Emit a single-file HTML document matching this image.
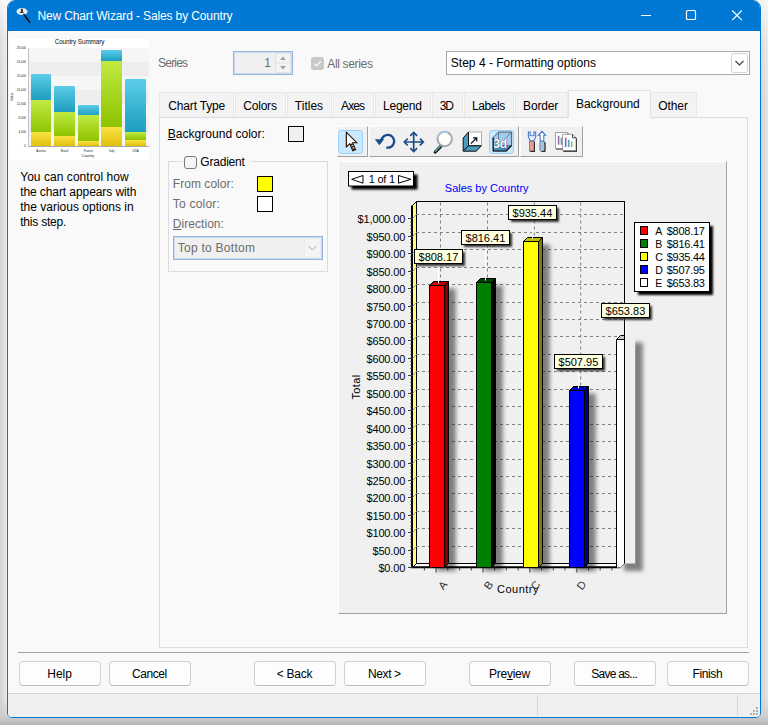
<!DOCTYPE html>
<html lang="en"><head><meta charset="utf-8"><title>New Chart Wizard - Sales by Country</title>
<style>
*{box-sizing:border-box;margin:0;padding:0}
html,body{width:768px;height:725px;overflow:hidden;background:#fff}
body{font-family:"Liberation Sans","DejaVu Sans",sans-serif;font-size:12px;color:#000;position:relative;background:#e6e6e6}
.sh{position:absolute}
.abs{position:absolute}
#win{position:absolute;left:7px;top:0;width:754px;height:718px;border:1px solid #0078d4;border-radius:8px 8px 5px 5px;background:#f9f9f9;overflow:hidden}
#title{position:absolute;left:-1px;top:-1px;width:754px;height:31px;background:#0078d4;color:#fff}
#title .cap{position:absolute;left:30.4px;top:7.5px;font-size:12px;line-height:16px;white-space:nowrap}
.t{position:absolute;white-space:nowrap;line-height:15px;font-size:12px}
.g{color:#6d6d6d}
.tt{z-index:3}
.btn{position:absolute;height:25px;width:82px;top:661px;background:#fdfdfd;border:1px solid #d0d0d0;border-bottom-color:#bcbcbc;border-radius:4px;text-align:center;line-height:23px;font-size:12px}
.tab{position:absolute;top:92px;height:25px;background:#f3f3f3;border:1px solid #e8e8e8;border-bottom:none;text-align:center;line-height:25px;font-size:12px;white-space:nowrap}
.tab.sel{top:90px;height:28px;background:#f9f9f9;line-height:26px;border-color:#e2e2e2;z-index:2}
.cbox{position:absolute;width:16px;height:16px;border:1px solid #000}
u{text-decoration:underline;text-underline-offset:1px}
</style></head>
<body>
<div class="sh" style="left:0;top:0;width:8px;height:725px;background:linear-gradient(to right,#d2d2d2,#ececec)"></div>
<div class="sh" style="left:760px;top:0;width:8px;height:725px;background:linear-gradient(to right,#d0d0d0,#e4e4e4)"></div>
<div class="sh" style="left:0;top:700px;width:8px;height:18px;background:linear-gradient(to bottom,rgba(204,204,204,0),#cccccc)"></div>
<div class="sh" style="left:760px;top:700px;width:8px;height:18px;background:linear-gradient(to bottom,rgba(204,204,204,0),#cccccc)"></div>
<div class="sh" style="left:0;top:717px;width:768px;height:8px;background:linear-gradient(to bottom,#cccccc,#b6b6b6)"></div>
<div class="sh" style="left:0;top:0;width:768px;height:110px;background:linear-gradient(to bottom,rgba(255,255,255,.75),rgba(255,255,255,.25) 40px,rgba(255,255,255,0))"></div>
<div class="sh" style="left:8px;top:712px;width:5px;height:5px;background:#f6f6f6"></div>
<div class="sh" style="left:755px;top:712px;width:5px;height:5px;background:#f6f6f6"></div>
<div id="win">
<div id="title"><svg class="abs" style="left:9px;top:6.5px" width="18" height="18" viewBox="0 0 18 18"><ellipse cx="6" cy="4.5" rx="5.5" ry="3.6" fill="#e4eef8"/><path d="M6 1.5c-1 0-1.3 1-1 2 .2.8-.3 1.500-1.600 2.400l5 .2c-1-.6-1.700-1.400-1.500-2.400.3-1.200 0-2.200-.9-2.200z" fill="#4a3020"/><path d="M8 7.500L13.600 15.300" stroke="#111" stroke-width="1.600" stroke-linecap="round"/></svg><span class="cap" style="letter-spacing:-0.126px">New Chart Wizard - Sales by Country</span><svg class="abs" style="left:500px;top:0" width="254" height="32" viewBox="0 0 254 32" fill="none" stroke="#fff" stroke-width="1.200"><path d="M134 15.500h10"/><rect x="179.500" y="10.500" width="9" height="9" rx="1"/><path d="M225.200 10.500l9.600 9.600M234.800 10.500l-9.600 9.600"/></svg></div>
<div class="abs" id="thumb" style="left:2px;top:38px;width:139px;height:121px;background:#fff">
<div class="abs" style="left:17.5px;top:8.600000000000001px;width:121.5px;height:99.0px;background:repeating-linear-gradient(to bottom,#f6f6f6 0,#f6f6f6 14.1px,#eeeeee 14.1px,#eeeeee 28.2px);border-left:1px solid #c4c4c4;border-bottom:1px solid #a8a8a8"></div>
<div class="abs" style="left:0;top:0;width:139px;text-align:center;font-size:6.4px;line-height:8px;top:-1.2px;color:#111;letter-spacing:-0.12px">Country Summary</div>
<div class="abs" style="left:20.5px;top:35.0px;width:20.9px;height:26.3px;background:linear-gradient(#5ccde8,#1d9dbf);border-radius:1px 1px 0 0"></div>
<div class="abs" style="left:20.5px;top:60.8px;width:20.9px;height:32.9px;background:linear-gradient(#c0ea42,#8ec300)"></div>
<div class="abs" style="left:20.5px;top:93.2px;width:20.9px;height:14.2px;background:linear-gradient(#f9e244,#dfc00c)"></div>
<div class="abs" style="left:44.1px;top:47.1px;width:20.9px;height:26.1px;background:linear-gradient(#5ccde8,#1d9dbf);border-radius:1px 1px 0 0"></div>
<div class="abs" style="left:44.1px;top:72.7px;width:20.9px;height:24.3px;background:linear-gradient(#c0ea42,#8ec300)"></div>
<div class="abs" style="left:44.1px;top:96.5px;width:20.9px;height:10.9px;background:linear-gradient(#f9e244,#dfc00c)"></div>
<div class="abs" style="left:67.9px;top:65.5px;width:20.9px;height:11.4px;background:linear-gradient(#5ccde8,#1d9dbf);border-radius:1px 1px 0 0"></div>
<div class="abs" style="left:67.9px;top:76.4px;width:20.9px;height:26.1px;background:linear-gradient(#c0ea42,#8ec300)"></div>
<div class="abs" style="left:67.9px;top:102.0px;width:20.9px;height:5.4px;background:linear-gradient(#f9e244,#dfc00c)"></div>
<div class="abs" style="left:91.4px;top:11.2px;width:20.9px;height:11.0px;background:linear-gradient(#5ccde8,#1d9dbf);border-radius:1px 1px 0 0"></div>
<div class="abs" style="left:91.4px;top:21.7px;width:20.9px;height:66.7px;background:linear-gradient(#c0ea42,#8ec300)"></div>
<div class="abs" style="left:91.4px;top:87.9px;width:20.9px;height:19.5px;background:linear-gradient(#f9e244,#dfc00c)"></div>
<div class="abs" style="left:115.2px;top:40.1px;width:20.9px;height:53.2px;background:linear-gradient(#5ccde8,#1d9dbf);border-radius:1px 1px 0 0"></div>
<div class="abs" style="left:115.2px;top:92.8px;width:20.9px;height:8.3px;background:linear-gradient(#c0ea42,#8ec300)"></div>
<div class="abs" style="left:115.2px;top:100.6px;width:20.9px;height:6.8px;background:linear-gradient(#f9e244,#dfc00c)"></div>
<div class="abs" style="left:0;width:16px;top:6.6px;text-align:right;font-size:3px;line-height:4px;color:#222">28,000</div>
<div class="abs" style="left:0;width:16px;top:20.7px;text-align:right;font-size:3px;line-height:4px;color:#222">24,000</div>
<div class="abs" style="left:0;width:16px;top:34.8px;text-align:right;font-size:3px;line-height:4px;color:#222">20,000</div>
<div class="abs" style="left:0;width:16px;top:48.9px;text-align:right;font-size:3px;line-height:4px;color:#222">16,000</div>
<div class="abs" style="left:0;width:16px;top:63.0px;text-align:right;font-size:3px;line-height:4px;color:#222">12,000</div>
<div class="abs" style="left:0;width:16px;top:77.1px;text-align:right;font-size:3px;line-height:4px;color:#222">8,000</div>
<div class="abs" style="left:0;width:16px;top:91.2px;text-align:right;font-size:3px;line-height:4px;color:#222">4,000</div>
<div class="abs" style="left:0;width:16px;top:105.3px;text-align:right;font-size:3px;line-height:4px;color:#222">0</div>
<div class="abs" style="left:21.0px;width:20px;top:110.0px;text-align:center;font-size:3px;line-height:4px;color:#222">Austria</div>
<div class="abs" style="left:44.5px;width:20px;top:110.0px;text-align:center;font-size:3px;line-height:4px;color:#222">Brazil</div>
<div class="abs" style="left:68.3px;width:20px;top:110.0px;text-align:center;font-size:3px;line-height:4px;color:#222">France</div>
<div class="abs" style="left:91.8px;width:20px;top:110.0px;text-align:center;font-size:3px;line-height:4px;color:#222">Italy</div>
<div class="abs" style="left:115.7px;width:20px;top:110.0px;text-align:center;font-size:3px;line-height:4px;color:#222">USA</div>
<div class="abs" style="left:68px;width:20px;top:114.5px;text-align:center;font-size:3.500px;line-height:4px;color:#222">Country</div>
<div class="abs" style="left:-8.5px;width:20px;top:56px;text-align:center;font-size:3.500px;line-height:4px;color:#222;transform:rotate(-90deg)">Value</div>
</div>
<div class="t" style="left:12.20px;top:168.80px;letter-spacing:0.048px">You can control how</div>
<div class="t" style="left:12.20px;top:183.80px;letter-spacing:-0.084px">the chart appears with</div>
<div class="t" style="left:12.20px;top:198.80px;letter-spacing:0.005px">the various options in</div>
<div class="t" style="left:12.20px;top:213.80px;letter-spacing:-0.214px">this step.</div>
<div class="t g" style="left:150.10px;top:54.90px;letter-spacing:-0.823px">Series</div>
<div class="abs" style="left:225px;top:50px;width:60px;height:24px;border:1px solid #94b2dc;background:#f0f0f0;box-shadow:inset 0 0 0 1px #cfdcf0"></div>
<div class="t g" style="left:254px;top:54.5px;width:9px;text-align:right">1</div>
<svg class="abs" style="left:267px;top:52px" width="16" height="20" viewBox="0 0 16 20"><rect x="0.5" y="0.5" width="15" height="19" fill="#f3f3f3" stroke="#e2e2e2"/><path d="M0.5 10h15" stroke="#e2e2e2"/><path d="M5 7l3-3.500 3 3.500z" fill="#a0a0a0"/><path d="M5 13l3 3.500 3-3.500z" fill="#a0a0a0"/></svg>
<svg class="abs" style="left:303px;top:56px" width="13" height="13" viewBox="0 0 13 13"><rect x="0" y="0" width="13" height="13" rx="2.500" fill="#c9c9c9"/><path d="M3.200 6.600l2.300 2.300 4.300-4.600" fill="none" stroke="#fff" stroke-width="1.200"/></svg>
<div class="t g" style="left:319.30px;top:55.90px;letter-spacing:-0.342px">All series</div>
<div class="abs" style="left:438px;top:50px;width:304px;height:24px;border:1px solid #a9a9a9;background:#fff"></div>
<div class="t" style="left:442.80px;top:54.90px;letter-spacing:0.014px">Step 4 - Formatting options</div>
<svg class="abs" style="left:723px;top:52px" width="18" height="20" viewBox="0 0 18 20"><rect x="0.5" y="0.5" width="16" height="19" rx="2" fill="#fdfdfd" stroke="#d4d4d4"/><path d="M4.500 8l4 4 4-4" fill="none" stroke="#404040" stroke-width="1.200"/></svg>
<div class="abs" style="left:151px;top:116px;width:589px;height:531px;border:1px solid #dcdcdc;background:#f9f9f9"></div>
<div class="tab" style="left:151px;width:75px;top:91px"></div>
<div class="tab" style="left:227px;width:51px;top:91px"></div>
<div class="tab" style="left:279px;width:45px;top:91px"></div>
<div class="tab" style="left:325px;width:41px;top:91px"></div>
<div class="tab" style="left:367px;width:56px;top:91px"></div>
<div class="tab" style="left:424px;width:31px;top:91px"></div>
<div class="tab" style="left:456px;width:50px;top:91px"></div>
<div class="tab" style="left:507px;width:53px;top:91px"></div>
<div class="tab sel" style="left:560px;width:83px;top:89px"></div>
<div class="tab" style="left:642px;width:47px;top:91px"></div>
<div class="t tt" style="left:160.30px;top:98.10px;letter-spacing:-0.164px">Chart Type</div>
<div class="t tt" style="left:235.30px;top:98.10px;letter-spacing:-0.215px">Colors</div>
<div class="t tt" style="left:286.80px;top:98.10px;letter-spacing:0.015px">Titles</div>
<div class="t tt" style="left:333.00px;top:98.10px;letter-spacing:-0.859px">Axes</div>
<div class="t tt" style="left:375.00px;top:98.10px;letter-spacing:-0.228px">Legend</div>
<div class="t tt" style="left:431.80px;top:98.10px;letter-spacing:-1.239px">3D</div>
<div class="t tt" style="left:464.00px;top:98.10px;letter-spacing:-0.412px">Labels</div>
<div class="t tt" style="left:515.10px;top:98.10px;letter-spacing:-0.184px">Border</div>
<div class="t tt" style="left:568.00px;top:96.10px;letter-spacing:-0.038px">Background</div>
<div class="t tt" style="left:650.30px;top:98.10px;letter-spacing:-0.103px">Other</div>
<div class="t" style="left:159.80px;top:125.80px;letter-spacing:0.024px"><u>B</u>ackground color:</div>
<div class="cbox" style="left:280px;top:125px;background:#f0f0f0"></div>
<div class="abs" style="left:160px;top:160px;width:160px;height:111px;border:1px solid #dcdcdc"></div>
<div class="abs" style="left:175px;top:154px;width:67.500px;height:14px;background:#f9f9f9"></div>
<div class="abs" style="left:176px;top:155px;width:13px;height:13px;border:1px solid #7a7a7a;border-radius:3px;background:#f5f5f5"></div>
<div class="t" style="left:192.30px;top:153.80px;letter-spacing:-0.204px">Gradient</div>
<div class="t g" style="left:164.80px;top:175.70px;letter-spacing:0.043px">From color:</div>
<div class="cbox" style="left:249px;top:175px;background:#ffff00"></div>
<div class="t g" style="left:164.80px;top:195.80px;letter-spacing:0.219px">To color:</div>
<div class="cbox" style="left:249px;top:195px;background:#fff"></div>
<div class="t g" style="left:164.80px;top:215.70px;letter-spacing:0.046px"><u>D</u>irection:</div>
<div class="abs" style="left:165px;top:235px;width:150px;height:24px;border:1px solid #94b2dc;background:#f0f0f0;box-shadow:inset 0 0 0 1px #cfdcf0"></div>
<div class="t g" style="left:169.80px;top:239.70px;letter-spacing:0.255px">Top to Bottom</div>
<svg class="abs" style="left:296px;top:237px" width="18" height="20" viewBox="0 0 18 20"><rect x="0.5" y="0.5" width="16" height="19" rx="2" fill="#f4f4f4" stroke="#ececec"/><path d="M4.500 8l4 4 4-4" fill="none" stroke="#a8a8a8" stroke-width="1"/></svg>
<div class="abs" style="left:329px;top:125px;width:31px;height:31px;background:#f0f0f0;border-right:1px solid #a0a0a0;border-bottom:1px solid #a0a0a0;border-top:1px solid #fcfcfc;border-left:1px solid #fcfcfc"></div>
<div class="abs" style="left:360.5px;top:125px;width:150.5px;height:31px;background:#f0f0f0;border-right:1px solid #a0a0a0;border-bottom:1px solid #a0a0a0;border-top:1px solid #fcfcfc;border-left:1px solid #fcfcfc"></div>
<div class="abs" style="left:511.5px;top:125px;width:63.5px;height:31px;background:#f0f0f0;border-right:1px solid #a0a0a0;border-bottom:1px solid #a0a0a0;border-top:1px solid #fcfcfc;border-left:1px solid #fcfcfc"></div>
<div class="abs" style="left:330px;top:129px;width:25px;height:24px;background:#cce8ff;border:1px solid #99d1ff;border-radius:3px"></div>
<div class="abs" style="left:481px;top:129px;width:25px;height:24px;background:#cce8ff;border:1px solid #99d1ff;border-radius:3px"></div>
<svg class="abs" style="left:0;top:0" width="752" height="716" viewBox="8 1 752 716"><path d="M346.400 132.300V146.800L349.800 143.600L352.500 149.800" fill="none" stroke="#2a1408" stroke-width="1"/><path d="M346.400 132.300V146.800L349.800 143.600L352.800 150.800L355.600 149.600L352.600 142.700H356.800Z" fill="#fff" stroke="#2a1408" stroke-width="1.100" stroke-linejoin="miter"/><path d="M351.300 143.800L354.200 150.300" stroke="#2a1408" stroke-width="2.300" stroke-dasharray="1.500 1"/><path d="M381.400 140.600A6.400 6.400 0 1 1 386.200 147.500" fill="none" stroke="#1b4b8c" stroke-width="2.300" stroke-linecap="butt"/><path d="M374.900 139.200H384.200L379.300 145.200Z" fill="#1b4b8c"/><path d="M413.700 133V151M404.800 142H422.800" stroke="#1b4b8c" stroke-width="1.700" fill="none"/><path d="M410.300 135.800L413.700 132.400L417.100 135.800M410.300 148.200L413.700 151.600L417.100 148.200M407.700 138.600L404.300 142L407.700 145.400M419.900 138.600L423.300 142L419.900 145.400" stroke="#1b4b8c" stroke-width="1.700" fill="none" stroke-linejoin="miter"/><path d="M440.800 146.300L435.300 152" stroke="#111" stroke-width="3.200" stroke-linecap="round"/><path d="M440.400 146.200L435.400 151.400" stroke="#4aa8a8" stroke-width="1.400" stroke-linecap="round"/><circle cx="444.700" cy="139" r="7.200" fill="#fffef8" stroke="#a4a8b4" stroke-width="2"/><path d="M438.200 137A7.200 7.200 0 0 1 448 132.600" fill="none" stroke="#a8d0f0" stroke-width="1.600"/><path d="M463.200 138L468.500 132V145.700L463.200 151Z" fill="#4a9cc0" stroke="#111" stroke-width="1"/><path d="M463.200 151.200L468.500 145.700H481.400L476.300 151.200Z" fill="#4a9cc0" stroke="#111" stroke-width="1"/><rect x="468.500" y="132" width="12.900" height="13.700" fill="#fff" stroke="#999" stroke-width="0.8"/><path d="M468.500 132V145.700H481.400" fill="none" stroke="#111" stroke-width="1"/><path d="M470.800 143.600L476.400 138.200M473 137.800H476.800V141.600" stroke="#111" fill="none" stroke-width="1.200"/><path d="M493.200 137.500L498.500 132H511.600V145.500L506.300 151H493.200Z" fill="#a4cbea" stroke="#4a5a6a" stroke-width="1"/><path d="M493.200 151L498.500 145.500H511.600L506.300 151Z" fill="#3f8fc2"/><path d="M498.500 132V145.500H511.600M498.500 145.500L493.200 151M506.300 137.500L511.600 132" fill="none" stroke="#4a6a88" stroke-width="0.8"/><path d="M493.200 137.500V151H506.300L511.600 145.500" fill="none" stroke="#111" stroke-width="1.200"/><text x="500.200" y="147.700" text-anchor="middle" font-family="&quot;Liberation Sans&quot;, sans-serif" font-weight="bold" font-size="12" fill="#fff" stroke="#1a2a3a" stroke-width="0.7" paint-order="stroke" letter-spacing="-0.3">3d</text><rect x="530.300" y="141.700" width="4.600" height="10.300" fill="#111"/><rect x="529.500" y="141" width="4.500" height="10" fill="#e6a08c" stroke="#555" stroke-width="0.6"/><path d="M528.400 132V137.200L530.300 140.800H533.700L535.700 137.200V132H534V135.800H530.200V132Z" fill="#f4f8ff" stroke="#4a78c8" stroke-width="1.100"/><rect x="540.800" y="141.700" width="4.800" height="10.300" rx="1.500" fill="#111"/><rect x="539.800" y="141" width="4.800" height="10.300" rx="1.800" fill="#a4c4e4" stroke="#555" stroke-width="0.6"/><path d="M542 131.300L538.300 135.300H540.200V141H543.800V135.300H545.600Z" fill="#fff" stroke="#4a78c8" stroke-width="1.100"/><path d="M556.200 133.200H568.500V149.600H556.200Z" fill="#111"/><path d="M555.500 132.500H567.500V148.500H555.500Z" fill="#fff" stroke="#8a8a8a" stroke-width="0.8"/><path d="M558.600 135.800V144.800" stroke="#8a62a8" stroke-width="1.500"/><path d="M561.400 137.800V144.800" stroke="#46a4d4" stroke-width="1.500"/><path d="M563.300 135.200H573.500L577 138.700V151.800H563.300Z" fill="#111"/><path d="M562.500 134.300H572.500L576 137.800V150.600H562.500Z" fill="#fff" stroke="#8a8a8a" stroke-width="0.8"/><path d="M572.500 134.300V137.800H576" fill="none" stroke="#222" stroke-width="0.8"/><path d="M565.700 137.800V147" stroke="#8a62a8" stroke-width="1.600"/><path d="M568.700 139.800V147" stroke="#46a4d4" stroke-width="1.600"/><path d="M571.700 141.200V147" stroke="#86c466" stroke-width="1.600"/></svg>
<div class="abs" style="left:330px;top:160px;width:389px;height:453px;background:#f0f0f0;border-left:1px solid #fff;border-top:1px solid #fff;border-right:1px solid #a0a0a0;border-bottom:1px solid #a0a0a0"></div>
<svg class="abs" style="left:0;top:0" width="752" height="716" viewBox="8 1 752 716" font-family="&quot;Liberation Sans&quot;, &quot;DejaVu Sans&quot;, sans-serif" font-size="11"><defs><filter id="b2" x="-30%" y="-30%" width="160%" height="160%"><feGaussianBlur stdDeviation="1.6"/></filter><filter id="b1" x="-30%" y="-30%" width="160%" height="160%"><feGaussianBlur stdDeviation="1.1"/></filter><filter id="b3" x="-50%" y="-5%" width="200%" height="110%"><feGaussianBlur stdDeviation="2"/></filter></defs><text x="444.8" y="192" fill="#0000ff">Sales by Country</text><rect x="351.5" y="174.5" width="66" height="15" fill="#000" filter="url(#b1)"/><rect x="348.5" y="171.5" width="65" height="14.5" fill="#fff" stroke="#000"/><path d="M351.700 179.300L363 175.500V183.200Z" fill="#fff" stroke="#000" stroke-width="1"/><path d="M410.800 179.300L398.500 175.500V183.200Z" fill="#fff" stroke="#000" stroke-width="1"/><text x="381.800" y="183" text-anchor="middle" fill="#000" letter-spacing="-0.25">1 of 1</text><rect x="416.5" y="201.5" width="208.0" height="362.0" fill="none" stroke="#000"/><path d="M412.5 205.5L416.5 201.5V563.5L412.5 567.5Z" fill="#ffff80" stroke="#000" stroke-width="1"/><path d="M412.0 205.5V567.5" stroke="#000" stroke-width="2"/><path d="M416 546.5H624.0" stroke="#808080" stroke-dasharray="3 3" fill="none"/><path d="M412.5 550.5L416.5 546.5" stroke="#808080" stroke-width="0.8" fill="none"/><path d="M416 528.5H624.0" stroke="#808080" stroke-dasharray="3 3" fill="none"/><path d="M412.5 532.5L416.5 528.5" stroke="#808080" stroke-width="0.8" fill="none"/><path d="M416 511.5H624.0" stroke="#808080" stroke-dasharray="3 3" fill="none"/><path d="M412.5 515.5L416.5 511.5" stroke="#808080" stroke-width="0.8" fill="none"/><path d="M416 493.5H624.0" stroke="#808080" stroke-dasharray="3 3" fill="none"/><path d="M412.5 497.5L416.5 493.5" stroke="#808080" stroke-width="0.8" fill="none"/><path d="M416 476.5H624.0" stroke="#808080" stroke-dasharray="3 3" fill="none"/><path d="M412.5 480.5L416.5 476.5" stroke="#808080" stroke-width="0.8" fill="none"/><path d="M416 459.5H624.0" stroke="#808080" stroke-dasharray="3 3" fill="none"/><path d="M412.5 463.5L416.5 459.5" stroke="#808080" stroke-width="0.8" fill="none"/><path d="M416 441.5H624.0" stroke="#808080" stroke-dasharray="3 3" fill="none"/><path d="M412.5 445.5L416.5 441.5" stroke="#808080" stroke-width="0.8" fill="none"/><path d="M416 424.5H624.0" stroke="#808080" stroke-dasharray="3 3" fill="none"/><path d="M412.5 428.5L416.5 424.5" stroke="#808080" stroke-width="0.8" fill="none"/><path d="M416 406.5H624.0" stroke="#808080" stroke-dasharray="3 3" fill="none"/><path d="M412.5 410.5L416.5 406.5" stroke="#808080" stroke-width="0.8" fill="none"/><path d="M416 389.5H624.0" stroke="#808080" stroke-dasharray="3 3" fill="none"/><path d="M412.5 393.5L416.5 389.5" stroke="#808080" stroke-width="0.8" fill="none"/><path d="M416 371.5H624.0" stroke="#808080" stroke-dasharray="3 3" fill="none"/><path d="M412.5 375.5L416.5 371.5" stroke="#808080" stroke-width="0.8" fill="none"/><path d="M416 354.5H624.0" stroke="#808080" stroke-dasharray="3 3" fill="none"/><path d="M412.5 358.5L416.5 354.5" stroke="#808080" stroke-width="0.8" fill="none"/><path d="M416 336.5H624.0" stroke="#808080" stroke-dasharray="3 3" fill="none"/><path d="M412.5 340.5L416.5 336.5" stroke="#808080" stroke-width="0.8" fill="none"/><path d="M416 319.5H624.0" stroke="#808080" stroke-dasharray="3 3" fill="none"/><path d="M412.5 323.5L416.5 319.5" stroke="#808080" stroke-width="0.8" fill="none"/><path d="M416 302.5H624.0" stroke="#808080" stroke-dasharray="3 3" fill="none"/><path d="M412.5 306.5L416.5 302.5" stroke="#808080" stroke-width="0.8" fill="none"/><path d="M416 284.5H624.0" stroke="#808080" stroke-dasharray="3 3" fill="none"/><path d="M412.5 288.5L416.5 284.5" stroke="#808080" stroke-width="0.8" fill="none"/><path d="M416 267.5H624.0" stroke="#808080" stroke-dasharray="3 3" fill="none"/><path d="M412.5 271.5L416.5 267.5" stroke="#808080" stroke-width="0.8" fill="none"/><path d="M416 249.5H624.0" stroke="#808080" stroke-dasharray="3 3" fill="none"/><path d="M412.5 253.5L416.5 249.5" stroke="#808080" stroke-width="0.8" fill="none"/><path d="M416 232.5H624.0" stroke="#808080" stroke-dasharray="3 3" fill="none"/><path d="M412.5 236.5L416.5 232.5" stroke="#808080" stroke-width="0.8" fill="none"/><path d="M416 214.5H624.0" stroke="#808080" stroke-dasharray="3 3" fill="none"/><path d="M412.5 218.5L416.5 214.5" stroke="#808080" stroke-width="0.8" fill="none"/><path d="M440.5 202.5V562.5" stroke="#808080" stroke-dasharray="3 3" fill="none"/><path d="M487.5 202.5V562.5" stroke="#808080" stroke-dasharray="3 3" fill="none"/><path d="M534.3 202.5V562.5" stroke="#808080" stroke-dasharray="3 3" fill="none"/><path d="M580.7 202.5V562.5" stroke="#808080" stroke-dasharray="3 3" fill="none"/><path d="M412.5 567.5L416.5 563.5H624.5L620.5 567.5Z" fill="#fff" stroke="#000" stroke-width="1"/><path d="M411.0 567.2H620.5" stroke="#000" stroke-width="2"/><path d="M408.0 567.5H412.5" stroke="#404040" stroke-width="1"/><text x="405.2" y="571.6" text-anchor="end" fill="#000" letter-spacing="-0.15">$0.00</text><path d="M408.0 550.5H412.5" stroke="#404040" stroke-width="1"/><text x="405.2" y="554.6" text-anchor="end" fill="#000" letter-spacing="-0.15">$50.00</text><path d="M408.0 532.5H412.5" stroke="#404040" stroke-width="1"/><text x="405.2" y="536.6" text-anchor="end" fill="#000" letter-spacing="-0.15">$100.00</text><path d="M408.0 515.5H412.5" stroke="#404040" stroke-width="1"/><text x="405.2" y="519.6" text-anchor="end" fill="#000" letter-spacing="-0.15">$150.00</text><path d="M408.0 497.5H412.5" stroke="#404040" stroke-width="1"/><text x="405.2" y="501.6" text-anchor="end" fill="#000" letter-spacing="-0.15">$200.00</text><path d="M408.0 480.5H412.5" stroke="#404040" stroke-width="1"/><text x="405.2" y="484.6" text-anchor="end" fill="#000" letter-spacing="-0.15">$250.00</text><path d="M408.0 463.5H412.5" stroke="#404040" stroke-width="1"/><text x="405.2" y="467.6" text-anchor="end" fill="#000" letter-spacing="-0.15">$300.00</text><path d="M408.0 445.5H412.5" stroke="#404040" stroke-width="1"/><text x="405.2" y="449.6" text-anchor="end" fill="#000" letter-spacing="-0.15">$350.00</text><path d="M408.0 428.5H412.5" stroke="#404040" stroke-width="1"/><text x="405.2" y="432.6" text-anchor="end" fill="#000" letter-spacing="-0.15">$400.00</text><path d="M408.0 410.5H412.5" stroke="#404040" stroke-width="1"/><text x="405.2" y="414.6" text-anchor="end" fill="#000" letter-spacing="-0.15">$450.00</text><path d="M408.0 393.5H412.5" stroke="#404040" stroke-width="1"/><text x="405.2" y="397.6" text-anchor="end" fill="#000" letter-spacing="-0.15">$500.00</text><path d="M408.0 375.5H412.5" stroke="#404040" stroke-width="1"/><text x="405.2" y="379.6" text-anchor="end" fill="#000" letter-spacing="-0.15">$550.00</text><path d="M408.0 358.5H412.5" stroke="#404040" stroke-width="1"/><text x="405.2" y="362.6" text-anchor="end" fill="#000" letter-spacing="-0.15">$600.00</text><path d="M408.0 340.5H412.5" stroke="#404040" stroke-width="1"/><text x="405.2" y="344.6" text-anchor="end" fill="#000" letter-spacing="-0.15">$650.00</text><path d="M408.0 323.5H412.5" stroke="#404040" stroke-width="1"/><text x="405.2" y="327.6" text-anchor="end" fill="#000" letter-spacing="-0.15">$700.00</text><path d="M408.0 306.5H412.5" stroke="#404040" stroke-width="1"/><text x="405.2" y="310.6" text-anchor="end" fill="#000" letter-spacing="-0.15">$750.00</text><path d="M408.0 288.5H412.5" stroke="#404040" stroke-width="1"/><text x="405.2" y="292.6" text-anchor="end" fill="#000" letter-spacing="-0.15">$800.00</text><path d="M408.0 271.5H412.5" stroke="#404040" stroke-width="1"/><text x="405.2" y="275.6" text-anchor="end" fill="#000" letter-spacing="-0.15">$850.00</text><path d="M408.0 253.5H412.5" stroke="#404040" stroke-width="1"/><text x="405.2" y="257.6" text-anchor="end" fill="#000" letter-spacing="-0.15">$900.00</text><path d="M408.0 236.5H412.5" stroke="#404040" stroke-width="1"/><text x="405.2" y="240.6" text-anchor="end" fill="#000" letter-spacing="-0.15">$950.00</text><path d="M408.0 218.5H412.5" stroke="#404040" stroke-width="1"/><text x="405.2" y="222.6" text-anchor="end" fill="#000" letter-spacing="-0.15">$1,000.00</text><path d="M410.0 567.2H412.5" stroke="#404040" stroke-width="0.7"/><path d="M410.0 563.7H412.5" stroke="#404040" stroke-width="0.7"/><path d="M410.0 560.2H412.5" stroke="#404040" stroke-width="0.7"/><path d="M410.0 556.7H412.5" stroke="#404040" stroke-width="0.7"/><path d="M410.0 553.3H412.5" stroke="#404040" stroke-width="0.7"/><path d="M410.0 549.8H412.5" stroke="#404040" stroke-width="0.7"/><path d="M410.0 546.3H412.5" stroke="#404040" stroke-width="0.7"/><path d="M410.0 542.8H412.5" stroke="#404040" stroke-width="0.7"/><path d="M410.0 539.3H412.5" stroke="#404040" stroke-width="0.7"/><path d="M410.0 535.8H412.5" stroke="#404040" stroke-width="0.7"/><path d="M410.0 532.3H412.5" stroke="#404040" stroke-width="0.7"/><path d="M410.0 528.9H412.5" stroke="#404040" stroke-width="0.7"/><path d="M410.0 525.4H412.5" stroke="#404040" stroke-width="0.7"/><path d="M410.0 521.9H412.5" stroke="#404040" stroke-width="0.7"/><path d="M410.0 518.4H412.5" stroke="#404040" stroke-width="0.7"/><path d="M410.0 514.9H412.5" stroke="#404040" stroke-width="0.7"/><path d="M410.0 511.4H412.5" stroke="#404040" stroke-width="0.7"/><path d="M410.0 507.9H412.5" stroke="#404040" stroke-width="0.7"/><path d="M410.0 504.5H412.5" stroke="#404040" stroke-width="0.7"/><path d="M410.0 501.0H412.5" stroke="#404040" stroke-width="0.7"/><path d="M410.0 497.5H412.5" stroke="#404040" stroke-width="0.7"/><path d="M410.0 494.0H412.5" stroke="#404040" stroke-width="0.7"/><path d="M410.0 490.5H412.5" stroke="#404040" stroke-width="0.7"/><path d="M410.0 487.0H412.5" stroke="#404040" stroke-width="0.7"/><path d="M410.0 483.5H412.5" stroke="#404040" stroke-width="0.7"/><path d="M410.0 480.1H412.5" stroke="#404040" stroke-width="0.7"/><path d="M410.0 476.6H412.5" stroke="#404040" stroke-width="0.7"/><path d="M410.0 473.1H412.5" stroke="#404040" stroke-width="0.7"/><path d="M410.0 469.6H412.5" stroke="#404040" stroke-width="0.7"/><path d="M410.0 466.1H412.5" stroke="#404040" stroke-width="0.7"/><path d="M410.0 462.6H412.5" stroke="#404040" stroke-width="0.7"/><path d="M410.0 459.1H412.5" stroke="#404040" stroke-width="0.7"/><path d="M410.0 455.6H412.5" stroke="#404040" stroke-width="0.7"/><path d="M410.0 452.2H412.5" stroke="#404040" stroke-width="0.7"/><path d="M410.0 448.7H412.5" stroke="#404040" stroke-width="0.7"/><path d="M410.0 445.2H412.5" stroke="#404040" stroke-width="0.7"/><path d="M410.0 441.7H412.5" stroke="#404040" stroke-width="0.7"/><path d="M410.0 438.2H412.5" stroke="#404040" stroke-width="0.7"/><path d="M410.0 434.7H412.5" stroke="#404040" stroke-width="0.7"/><path d="M410.0 431.2H412.5" stroke="#404040" stroke-width="0.7"/><path d="M410.0 427.8H412.5" stroke="#404040" stroke-width="0.7"/><path d="M410.0 424.3H412.5" stroke="#404040" stroke-width="0.7"/><path d="M410.0 420.8H412.5" stroke="#404040" stroke-width="0.7"/><path d="M410.0 417.3H412.5" stroke="#404040" stroke-width="0.7"/><path d="M410.0 413.8H412.5" stroke="#404040" stroke-width="0.7"/><path d="M410.0 410.3H412.5" stroke="#404040" stroke-width="0.7"/><path d="M410.0 406.8H412.5" stroke="#404040" stroke-width="0.7"/><path d="M410.0 403.4H412.5" stroke="#404040" stroke-width="0.7"/><path d="M410.0 399.9H412.5" stroke="#404040" stroke-width="0.7"/><path d="M410.0 396.4H412.5" stroke="#404040" stroke-width="0.7"/><path d="M410.0 392.9H412.5" stroke="#404040" stroke-width="0.7"/><path d="M410.0 389.4H412.5" stroke="#404040" stroke-width="0.7"/><path d="M410.0 385.9H412.5" stroke="#404040" stroke-width="0.7"/><path d="M410.0 382.4H412.5" stroke="#404040" stroke-width="0.7"/><path d="M410.0 379.0H412.5" stroke="#404040" stroke-width="0.7"/><path d="M410.0 375.5H412.5" stroke="#404040" stroke-width="0.7"/><path d="M410.0 372.0H412.5" stroke="#404040" stroke-width="0.7"/><path d="M410.0 368.5H412.5" stroke="#404040" stroke-width="0.7"/><path d="M410.0 365.0H412.5" stroke="#404040" stroke-width="0.7"/><path d="M410.0 361.5H412.5" stroke="#404040" stroke-width="0.7"/><path d="M410.0 358.0H412.5" stroke="#404040" stroke-width="0.7"/><path d="M410.0 354.6H412.5" stroke="#404040" stroke-width="0.7"/><path d="M410.0 351.1H412.5" stroke="#404040" stroke-width="0.7"/><path d="M410.0 347.6H412.5" stroke="#404040" stroke-width="0.7"/><path d="M410.0 344.1H412.5" stroke="#404040" stroke-width="0.7"/><path d="M410.0 340.6H412.5" stroke="#404040" stroke-width="0.7"/><path d="M410.0 337.1H412.5" stroke="#404040" stroke-width="0.7"/><path d="M410.0 333.6H412.5" stroke="#404040" stroke-width="0.7"/><path d="M410.0 330.2H412.5" stroke="#404040" stroke-width="0.7"/><path d="M410.0 326.7H412.5" stroke="#404040" stroke-width="0.7"/><path d="M410.0 323.2H412.5" stroke="#404040" stroke-width="0.7"/><path d="M410.0 319.7H412.5" stroke="#404040" stroke-width="0.7"/><path d="M410.0 316.2H412.5" stroke="#404040" stroke-width="0.7"/><path d="M410.0 312.7H412.5" stroke="#404040" stroke-width="0.7"/><path d="M410.0 309.2H412.5" stroke="#404040" stroke-width="0.7"/><path d="M410.0 305.8H412.5" stroke="#404040" stroke-width="0.7"/><path d="M410.0 302.3H412.5" stroke="#404040" stroke-width="0.7"/><path d="M410.0 298.8H412.5" stroke="#404040" stroke-width="0.7"/><path d="M410.0 295.3H412.5" stroke="#404040" stroke-width="0.7"/><path d="M410.0 291.8H412.5" stroke="#404040" stroke-width="0.7"/><path d="M410.0 288.3H412.5" stroke="#404040" stroke-width="0.7"/><path d="M410.0 284.8H412.5" stroke="#404040" stroke-width="0.7"/><path d="M410.0 281.3H412.5" stroke="#404040" stroke-width="0.7"/><path d="M410.0 277.9H412.5" stroke="#404040" stroke-width="0.7"/><path d="M410.0 274.4H412.5" stroke="#404040" stroke-width="0.7"/><path d="M410.0 270.9H412.5" stroke="#404040" stroke-width="0.7"/><path d="M410.0 267.4H412.5" stroke="#404040" stroke-width="0.7"/><path d="M410.0 263.9H412.5" stroke="#404040" stroke-width="0.7"/><path d="M410.0 260.4H412.5" stroke="#404040" stroke-width="0.7"/><path d="M410.0 256.9H412.5" stroke="#404040" stroke-width="0.7"/><path d="M410.0 253.5H412.5" stroke="#404040" stroke-width="0.7"/><path d="M410.0 250.0H412.5" stroke="#404040" stroke-width="0.7"/><path d="M410.0 246.5H412.5" stroke="#404040" stroke-width="0.7"/><path d="M410.0 243.0H412.5" stroke="#404040" stroke-width="0.7"/><path d="M410.0 239.5H412.5" stroke="#404040" stroke-width="0.7"/><path d="M410.0 236.0H412.5" stroke="#404040" stroke-width="0.7"/><path d="M410.0 232.5H412.5" stroke="#404040" stroke-width="0.7"/><path d="M410.0 229.1H412.5" stroke="#404040" stroke-width="0.7"/><path d="M410.0 225.6H412.5" stroke="#404040" stroke-width="0.7"/><path d="M410.0 222.1H412.5" stroke="#404040" stroke-width="0.7"/><path d="M424.4 567.5V570.5" stroke="#404040" stroke-width="1"/><path d="M436.1 567.5V572.5" stroke="#404040" stroke-width="1"/><path d="M447.8 567.5V570.5" stroke="#404040" stroke-width="1"/><path d="M459.6 567.5V570.5" stroke="#404040" stroke-width="1"/><path d="M471.3 567.5V570.5" stroke="#404040" stroke-width="1"/><path d="M483.0 567.5V572.5" stroke="#404040" stroke-width="1"/><path d="M494.7 567.5V570.5" stroke="#404040" stroke-width="1"/><path d="M506.4 567.5V570.5" stroke="#404040" stroke-width="1"/><path d="M518.2 567.5V570.5" stroke="#404040" stroke-width="1"/><path d="M529.9 567.5V572.5" stroke="#404040" stroke-width="1"/><path d="M541.6 567.5V570.5" stroke="#404040" stroke-width="1"/><path d="M553.3 567.5V570.5" stroke="#404040" stroke-width="1"/><path d="M565.0 567.5V570.5" stroke="#404040" stroke-width="1"/><path d="M576.8 567.5V572.5" stroke="#404040" stroke-width="1"/><path d="M588.5 567.5V570.5" stroke="#404040" stroke-width="1"/><path d="M600.2 567.5V570.5" stroke="#404040" stroke-width="1"/><path d="M611.9 567.5V570.5" stroke="#404040" stroke-width="1"/><text transform="translate(359.600 387) rotate(-90)" text-anchor="middle" fill="#000" letter-spacing="0.35">Total</text><text x="497" y="592.800" fill="#000" letter-spacing="0.5">Country</text><text transform="translate(442.7 585.300) rotate(-52)" text-anchor="middle" y="3.8" font-size="11" fill="#333">A</text><text transform="translate(488.5 585.300) rotate(-52)" text-anchor="middle" y="3.8" font-size="11" fill="#333">B</text><text transform="translate(535.5 585.300) rotate(-52)" text-anchor="middle" y="3.8" font-size="11" fill="#333">C</text><text transform="translate(581.5 585.300) rotate(-52)" text-anchor="middle" y="3.8" font-size="11" fill="#333">D</text><rect x="437" y="288.5" width="18.8" height="282.5" fill="#000" fill-opacity="0.47" filter="url(#b3)"/><rect x="484" y="285.5" width="18.8" height="285.5" fill="#000" fill-opacity="0.47" filter="url(#b3)"/><rect x="531" y="244.5" width="18.8" height="326.5" fill="#000" fill-opacity="0.47" filter="url(#b3)"/><rect x="577" y="393.5" width="18.8" height="177.5" fill="#000" fill-opacity="0.47" filter="url(#b3)"/><rect x="624" y="342.5" width="18.8" height="228.5" fill="#000" fill-opacity="0.47" filter="url(#b3)"/><rect x="625.0" y="335" width="10.2" height="228.5" fill="#f0f0f0"/><path d="M444.5 285.5L448.5 281.5V563.5L444.5 567.5Z" fill="#800000" stroke="#000" stroke-width="1"/><path d="M429.5 285.5L433.5 281.5H448.5L444.5 285.5Z" fill="#c00000" stroke="#000" stroke-width="1"/><rect x="429.5" y="285.5" width="15" height="282.0" fill="#ff0000" stroke="#000" stroke-width="1"/><path d="M491.5 282.5L495.5 278.5V563.5L491.5 567.5Z" fill="#000000" stroke="#000" stroke-width="1"/><path d="M476.5 282.5L480.5 278.5H495.5L491.5 282.5Z" fill="#004000" stroke="#000" stroke-width="1"/><rect x="476.5" y="282.5" width="15" height="285.0" fill="#008000" stroke="#000" stroke-width="1"/><path d="M538.5 241.5L542.5 237.5V563.5L538.5 567.5Z" fill="#808000" stroke="#000" stroke-width="1"/><path d="M523.5 241.5L527.5 237.5H542.5L538.5 241.5Z" fill="#c0c000" stroke="#000" stroke-width="1"/><rect x="523.5" y="241.5" width="15" height="326.0" fill="#ffff00" stroke="#000" stroke-width="1"/><path d="M584.5 390.5L588.5 386.5V563.5L584.5 567.5Z" fill="#000080" stroke="#000" stroke-width="1"/><path d="M569.5 390.5L573.5 386.5H588.5L584.5 390.5Z" fill="#0000c0" stroke="#000" stroke-width="1"/><rect x="569.5" y="390.5" width="15" height="177.0" fill="#0000ff" stroke="#000" stroke-width="1"/><path d="M616.5 339.5L620.5 335.5H624.5V339.5Z" fill="#c8c8c8" stroke="#000"/><path d="M616.5 339.5H624.5V563.5L620.5 567.5H616.5Z" fill="#ffffff"/><path d="M616.5 568.0V339.5H624.5" fill="none" stroke="#000"/><path d="M624.5 201.5V563.5" stroke="#000"/><path d="M438.5 263.5V283.5" stroke="#fff" stroke-width="1"/><rect x="417.0" y="252.0" width="48" height="14" fill="#333" filter="url(#b1)"/><rect x="414.5" y="249.5" width="48" height="14" fill="#ffffe1" stroke="#000"/><text x="438.4" y="261.1" text-anchor="middle" fill="#000">$808.17</text><path d="M485.5 244.5V280.5" stroke="#fff" stroke-width="1"/><rect x="464.0" y="233.0" width="48" height="14" fill="#333" filter="url(#b1)"/><rect x="461.5" y="230.5" width="48" height="14" fill="#ffffe1" stroke="#000"/><text x="485.4" y="242.1" text-anchor="middle" fill="#000">$816.41</text><path d="M532.5 219.5V239.5" stroke="#fff" stroke-width="1"/><rect x="511.0" y="208.0" width="48" height="14" fill="#333" filter="url(#b1)"/><rect x="508.5" y="205.5" width="48" height="14" fill="#ffffe1" stroke="#000"/><text x="532.4" y="217.1" text-anchor="middle" fill="#000">$935.44</text><path d="M578.5 368.5V388.5" stroke="#fff" stroke-width="1"/><rect x="557.0" y="357.0" width="48" height="14" fill="#333" filter="url(#b1)"/><rect x="554.5" y="354.5" width="48" height="14" fill="#ffffe1" stroke="#000"/><text x="578.4" y="366.1" text-anchor="middle" fill="#000">$507.95</text><path d="M625.5 317.5V337.5" stroke="#fff" stroke-width="1"/><rect x="604.0" y="306.0" width="48" height="14" fill="#333" filter="url(#b1)"/><rect x="601.5" y="303.5" width="48" height="14" fill="#ffffe1" stroke="#000"/><text x="625.4" y="315.1" text-anchor="middle" fill="#000">$653.83</text><rect x="638" y="226" width="75" height="69" fill="#000" filter="url(#b1)"/><rect x="634.500" y="222.500" width="75" height="69" fill="#fff" stroke="#000"/><rect x="640.500" y="226.5" width="7" height="8" fill="#ff0000" stroke="#000"/><text x="655.200" y="234.6" fill="#000" font-size="10.5">A</text><text x="704.600" y="234.6" text-anchor="end" fill="#000" letter-spacing="-0.28">$808.17</text><rect x="640.500" y="239.5" width="7" height="8" fill="#008000" stroke="#000"/><text x="655.200" y="247.6" fill="#000" font-size="10.5">B</text><text x="704.600" y="247.6" text-anchor="end" fill="#000" letter-spacing="-0.28">$816.41</text><rect x="640.500" y="252.5" width="7" height="8" fill="#ffff00" stroke="#000"/><text x="655.200" y="260.7" fill="#000" font-size="10.5">C</text><text x="704.600" y="260.7" text-anchor="end" fill="#000" letter-spacing="-0.28">$935.44</text><rect x="640.500" y="265.5" width="7" height="8" fill="#0000ff" stroke="#000"/><text x="655.200" y="273.7" fill="#000" font-size="10.5">D</text><text x="704.600" y="273.7" text-anchor="end" fill="#000" letter-spacing="-0.28">$507.95</text><rect x="640.500" y="278.5" width="7" height="8" fill="#ffffff" stroke="#000"/><text x="655.200" y="286.7" fill="#000" font-size="10.5">E</text><text x="704.600" y="286.7" text-anchor="end" fill="#000" letter-spacing="-0.28">$653.83</text></svg>
<div class="abs" style="left:10px;top:651px;width:731px;height:1px;background:#a0a0a0"></div>
<div class="btn" style="left:11px;top:660px"></div>
<div class="t" style="left:39.30px;top:665.70px;letter-spacing:-0.059px">Help</div>
<div class="btn" style="left:101px;top:660px"></div>
<div class="t" style="left:124.00px;top:665.70px;letter-spacing:-0.45px">Cancel</div>
<div class="btn" style="left:246px;top:660px"></div>
<div class="t" style="left:268.70px;top:665.70px;letter-spacing:-0.264px">&lt; Back</div>
<div class="btn" style="left:336px;top:660px"></div>
<div class="t" style="left:360.00px;top:665.70px;letter-spacing:-0.383px">Next &gt;</div>
<div class="btn" style="left:461px;top:660px"></div>
<div class="t" style="left:481.05px;top:665.70px;letter-spacing:-0.28px">Pre<u>v</u>iew</div>
<div class="btn" style="left:566px;top:660px"></div>
<div class="t" style="left:583.25px;top:665.70px;letter-spacing:-0.751px">Save as...</div>
<div class="btn" style="left:659px;top:660px"></div>
<div class="t" style="left:684.50px;top:665.70px;letter-spacing:-0.382px">Finish</div>
<div class="abs" style="left:0;top:691.5px;width:754px;height:26px;background:#f0f0f0;border-top:1px solid #d7d7d7"></div>
<div class="abs" style="left:529px;top:694px;width:1px;height:21px;background:#d7d7d7"></div>
<div class="abs" style="left:729px;top:694px;width:1px;height:21px;background:#d7d7d7"></div>
<svg class="abs" style="left:742px;top:706px" width="8" height="8" fill="#b4b4b4"><rect x="6" y="0" width="2" height="2"/><rect x="3" y="3" width="2" height="2"/><rect x="6" y="3" width="2" height="2"/><rect x="0" y="6" width="2" height="2"/><rect x="3" y="6" width="2" height="2"/><rect x="6" y="6" width="2" height="2"/></svg>
</div>
</body></html>
